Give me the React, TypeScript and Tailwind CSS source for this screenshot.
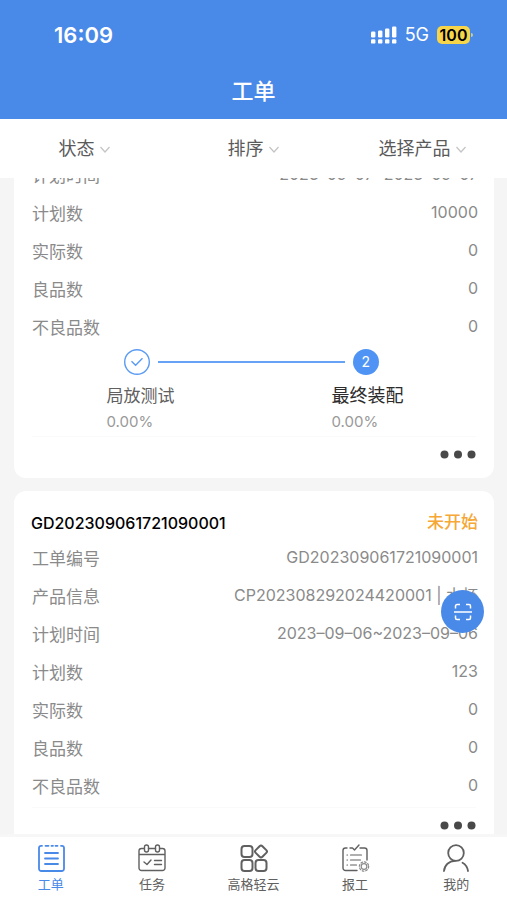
import type { ReactNode } from 'react';

type Field = { label: string; value: string };

const FILTERS = ['状态', '排序', '选择产品'];

const FIRST_ORDER: Field[] = [
  { label: '计划时间', value: '2023–09–07~2023–09–07' },
  { label: '计划数', value: '10000' },
  { label: '实际数', value: '0' },
  { label: '良品数', value: '0' },
  { label: '不良品数', value: '0' },
];

const SECOND_ORDER: Field[] = [
  { label: '工单编号', value: 'GD202309061721090001' },
  { label: '产品信息', value: 'CP202308292024420001 | 水杯' },
  { label: '计划时间', value: '2023–09–06~2023–09–06' },
  { label: '计划数', value: '123' },
  { label: '实际数', value: '0' },
  { label: '良品数', value: '0' },
  { label: '不良品数', value: '0' },
];

function StatusBar() {
  return (
    <div className="flex h-[70px] items-center justify-between pl-[54px] pr-[34px]">
      <span className="text-[22px] font-semibold">16:09</span>
      <div className="flex items-center gap-2">
        <svg width="26" height="18" viewBox="0 0 26 18" fill="currentColor" aria-hidden="true">
          <rect x="0" y="5.5" width="4.4" height="6" rx="1.2" />
          <rect x="7" y="4.5" width="4.4" height="7" rx="1.2" />
          <rect x="14" y="2.5" width="4.4" height="9" rx="1.2" />
          <rect x="21" y="0.5" width="4.4" height="11" rx="1.2" />
          <rect x="0" y="13.2" width="4.4" height="4.4" rx="1.2" />
          <rect x="7" y="13.2" width="4.4" height="4.4" rx="1.2" />
          <rect x="14" y="13.2" width="4.4" height="4.4" rx="1.2" />
          <rect x="21" y="13.2" width="4.4" height="4.4" rx="1.2" />
        </svg>
        <span className="text-lg">5G</span>
        <div className="flex items-center gap-px">
          <span className="flex h-[18px] w-[33px] items-center justify-center rounded-[5px] bg-[#f6d54b] text-base font-semibold text-black">
            100
          </span>
          <span className="h-1 w-[2px] rounded-r bg-[#c9cf8f]" />
        </div>
      </div>
    </div>
  );
}

function FieldList({ fields }: { fields: Field[] }) {
  return (
    <dl className="pb-[2px] pl-[18px] pr-4 text-[#8a8a8a]">
      {fields.map((f) => (
        <div key={f.label} className="flex h-[38px] items-start justify-between">
          <dt className="text-[17px] leading-10">{f.label}</dt>
          <dd className="whitespace-nowrap text-base leading-9">{f.value}</dd>
        </div>
      ))}
    </dl>
  );
}

function CardFooter() {
  return (
    <div className="mx-[18px] flex h-[42px] items-start justify-end border-t border-[#fafafa] pt-[13px]">
      <button type="button" aria-label="更多" className="flex h-[9px] items-center text-[#484848]">
        <svg width="36" height="9" viewBox="0 0 36 9" fill="currentColor" aria-hidden="true">
          <circle cx="4.5" cy="4.5" r="4" />
          <circle cx="18" cy="4.5" r="4" />
          <circle cx="31.5" cy="4.5" r="4" />
        </svg>
      </button>
    </div>
  );
}

function Steps() {
  return (
    <div className="pb-[2px] pt-px">
      <div className="flex items-center gap-2 pl-[23%] pr-[24%]">
        <svg width="26" height="26" viewBox="0 0 26 26" fill="none" stroke="#5b9bf3" aria-hidden="true">
          <circle cx="13" cy="13" r="12.3" strokeWidth="1.4" />
          <path d="M7.5 12.3l4.1 4 6.9-7" strokeWidth="1.4" />
        </svg>
        <span className="h-[2px] flex-1 bg-[#66a3f7]" />
        <span className="flex size-[26px] items-center justify-center rounded-full bg-[#4f94f4] text-sm text-white">
          2
        </span>
      </div>
      <div className="grid grid-cols-2 px-[13px] pt-[7px]">
        <div className="flex justify-center">
          <div>
            <div className="h-7 text-[17px] leading-7 text-[#606060]">局放测试</div>
            <div className="h-6 text-[15px] leading-6 text-[#999]">0.00%</div>
          </div>
        </div>
        <div className="flex justify-center">
          <div>
            <div className="h-7 text-lg leading-7 text-[#2c2c2c]">最终装配</div>
            <div className="h-6 text-[15px] leading-6 text-[#999]">0.00%</div>
          </div>
        </div>
      </div>
    </div>
  );
}

function Tab({ label, active, children }: { label: string; active?: boolean; children: ReactNode }) {
  return (
    <a
      href="#"
      className={`flex flex-1 flex-col items-center gap-[2px] pt-[5px] ${active ? 'text-[#4989e8]' : 'text-[#606060]'}`}
    >
      <svg
        width="32"
        height="32"
        viewBox="0 0 32 32"
        fill="none"
        stroke="currentColor"
        strokeWidth="1.8"
        strokeLinecap="round"
        strokeLinejoin="round"
        aria-hidden="true"
      >
        {children}
      </svg>
      <span className="text-[13px] leading-4">{label}</span>
    </a>
  );
}

function TabBar() {
  return (
    <nav className="flex h-[66px] shrink-0 border-t-[3px] border-[#f7f7f7] bg-white">
      <Tab label="工单" active>
        <path d="M7 3.800H6a2 2 0 0 0-2 2v21a2.200 2.200 0 0 0 2.200 2.200h20.600a2.200 2.200 0 0 0 2.200-2.200V5.800a2 2 0 0 0-2-2h-1M10.500 3.800h3M16.500 3.800h1.500M20.500 3.800h2" />
        <path d="M10 11h13M10 16.500h13M10 22h13" />
      </Tab>
      <Tab label="任务">
        <g strokeWidth="1.4">
          <path d="M8 6.500H5.500a2.500 2.500 0 0 0-2.500 2.500v17a2.500 2.500 0 0 0 2.500 2.500h21a2.500 2.500 0 0 0 2.500-2.500V9a2.500 2.500 0 0 0-2.500-2.500H24M12.500 6.500h7M3 12.500h26" />
          <rect x="8.500" y="3" width="4" height="7" rx="2" />
          <rect x="19.500" y="3" width="4" height="7" rx="2" />
          <path d="M8 20l3 2.500 4-4.500M18.500 18.500h7M18.500 22.500h7" />
        </g>
      </Tab>
      <Tab label="高格轻云">
        <g strokeWidth="2">
          <rect x="3.500" y="4" width="11" height="11" rx="3" />
          <rect x="3.500" y="18" width="11" height="11" rx="3" />
          <rect x="17.500" y="18" width="11" height="11" rx="3" />
          <rect x="18.250" y="4.750" width="9.500" height="9.500" rx="2" transform="rotate(45 23 9.500)" />
        </g>
      </Tab>
      <Tab label="报工">
        <g strokeWidth="1.400">
          <path d="M8 6H6.500A2.500 2.500 0 0 0 4 8.500v17.500a2.500 2.500 0 0 0 2.500 2.500H18M11 6h2.500l2 2 4.500-5M21 6h4.500a2.500 2.500 0 0 1 2.500 2.500V18" />
          <path d="M8 13h.5M11.500 13h11M8 18h.5M11.500 18h10M8 23h.5M11.500 23h6" strokeWidth="1.200" />
          <g stroke="#8a8a8a">
            <circle cx="25" cy="24.500" r="2.800" strokeWidth="1.200" />
            <circle cx="25" cy="24.500" r="4.600" strokeWidth="1.300" strokeDasharray="1.600 2" />
          </g>
        </g>
      </Tab>
      <Tab label="我的">
        <circle cx="16" cy="11" r="7.800" />
        <path d="M4 29c.5-6 5-10 11-10.200M22.500 20.800c3 1.700 4.900 4.500 5.500 8.200" />
      </Tab>
    </nav>
  );
}

export default function App() {
  return (
    <div className="flex h-screen flex-col overflow-hidden bg-[#f5f5f5] font-[Inter,'Noto_Sans_CJK_SC',sans-serif]">
      <header className="shrink-0 bg-[#4989e8] text-white">
        <StatusBar />
        <h1 className="flex h-[49px] items-start justify-center pt-[5px] text-[22px] font-medium leading-8">工单</h1>
      </header>

      <div className="grid h-[59px] shrink-0 grid-cols-3 bg-white pt-px">
        {FILTERS.map((name) => (
          <button key={name} type="button" className="flex items-center justify-center gap-1 text-lg text-[#5a5a5a]">
            {name}
            <svg width="12" height="12" viewBox="0 0 12 12" fill="none" stroke="#c4c4c4" aria-hidden="true">
              <path d="M1.500 4L6 9l4.500-5" strokeWidth="1.200" />
            </svg>
          </button>
        ))}
      </div>

      <main className="relative min-h-0 flex-1">
        <div className="flex h-full flex-col gap-[13px] overflow-hidden pl-[14px] pr-[13px]">
          {/* scrolled up: the first row of this card sits partly behind the filter bar */}
          <article className="-mt-[22px] shrink-0 rounded-b-xl bg-white">
            <FieldList fields={FIRST_ORDER} />
            <Steps />
            <CardFooter />
          </article>

          <article className="shrink-0 rounded-xl bg-white pt-4">
            <div className="flex h-8 items-center justify-between pl-[17px] pr-4">
              <h2 className="text-base font-medium text-black">GD202309061721090001</h2>
              <span className="text-[17px] font-medium text-[#f5a836]">未开始</span>
            </div>
            <FieldList fields={SECOND_ORDER} />
            <CardFooter />
          </article>
        </div>

        <button
          type="button"
          aria-label="扫码"
          className="absolute bottom-[201px] right-[23px] flex size-[43px] items-center justify-center rounded-full bg-[#4989e8] text-white"
        >
          <svg width="18" height="18" viewBox="0 0 18 18" fill="none" stroke="currentColor" strokeWidth="1.500" aria-hidden="true">
            <path d="M1.500 5.500V3A1.500 1.500 0 0 1 3 1.500h3M12 1.500h3A1.500 1.500 0 0 1 16.500 3v2.500M16.500 12.500V15a1.500 1.500 0 0 1-1.500 1.500h-3M6 16.500H3A1.500 1.500 0 0 1 1.500 15v-2.500M0 9h18" />
          </svg>
        </button>
      </main>

      <TabBar />
    </div>
  );
}
